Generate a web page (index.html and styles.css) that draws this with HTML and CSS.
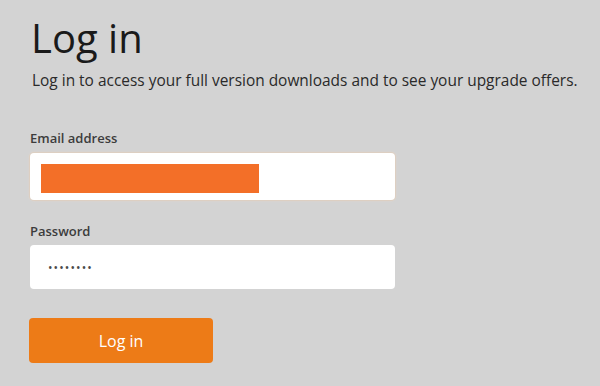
FILE: index.html
```html
<!DOCTYPE html>
<html lang="en">
<head>
<meta charset="utf-8">
<title>Log in</title>
<link rel="stylesheet" href="styles.css">
</head>
<body>
<main class="page">
  <h1 class="title">Log in</h1>
  <p class="intro">Log in to access your full version downloads and to see your upgrade offers.</p>
  <form class="form">
    <div class="field">
      <label class="label label-first">Email address</label>
      <div class="input input-focus"><span class="redact"></span></div>
    </div>
    <div class="field">
      <label class="label">Password</label>
      <div class="input"><span class="dots">••••••••</span></div>
    </div>
    <button type="button" class="btn">Log in</button>
  </form>
</main>
</body>
</html>
```
FILE: styles.css
```css
html, body {
  margin: 0;
  padding: 0;
  background: #d3d3d3;
}
body {
  font-family: "Open Sans", "Liberation Sans", sans-serif;
  color: #222;
}
.page {
  padding: 14px 0 0 30px;
}
.title {
  margin: 0 0 0 1px;
  font-size: 40px;
  font-weight: 400;
  line-height: 48px;
  color: #1a1a1a;
}
.intro {
  margin: 7px 0 0 2px;
  font-size: 15.45px;
  line-height: 22px;
  color: #2a2a2a;
}
.form {
  display: flex;
  flex-direction: column;
  margin-top: 38px;
}
.field {
  display: flex;
  flex-direction: column;
}
.field + .field {
  margin-top: 22px;
}
.label {
  font-size: 13px;
  font-weight: 600;
  line-height: 18px;
  color: #3c3c3c;
  margin-bottom: 5px;
}
.label-first {
  margin-bottom: 6px;
}
.input {
  width: 365px;
  height: 44px;
  box-sizing: border-box;
  background: #fff;
  border-radius: 4px;
  display: flex;
  align-items: center;
  padding-left: 11px;
}
.input-focus {
  height: 47px;
  box-shadow: 0 0 0 1px #ddcfc2, 0 0 2px 1px #e2d6ca;
}
.redact {
  display: block;
  width: 218px;
  height: 29px;
  background: #f36f28;
  margin-top: 4px;
}
.dots {
  font-size: 12px;
  letter-spacing: 1.1px;
  color: #4a4a4a;
  padding-left: 7px;
}
.btn {
  margin-top: 29px;
  width: 184px;
  height: 45px;
  margin-left: -1px;
  border: none;
  border-radius: 4px;
  background: #ed7b17;
  color: #fff;
  font-family: "Open Sans", "Liberation Sans", sans-serif;
  font-size: 16px;
  font-weight: 400;
  cursor: pointer;
}
```
